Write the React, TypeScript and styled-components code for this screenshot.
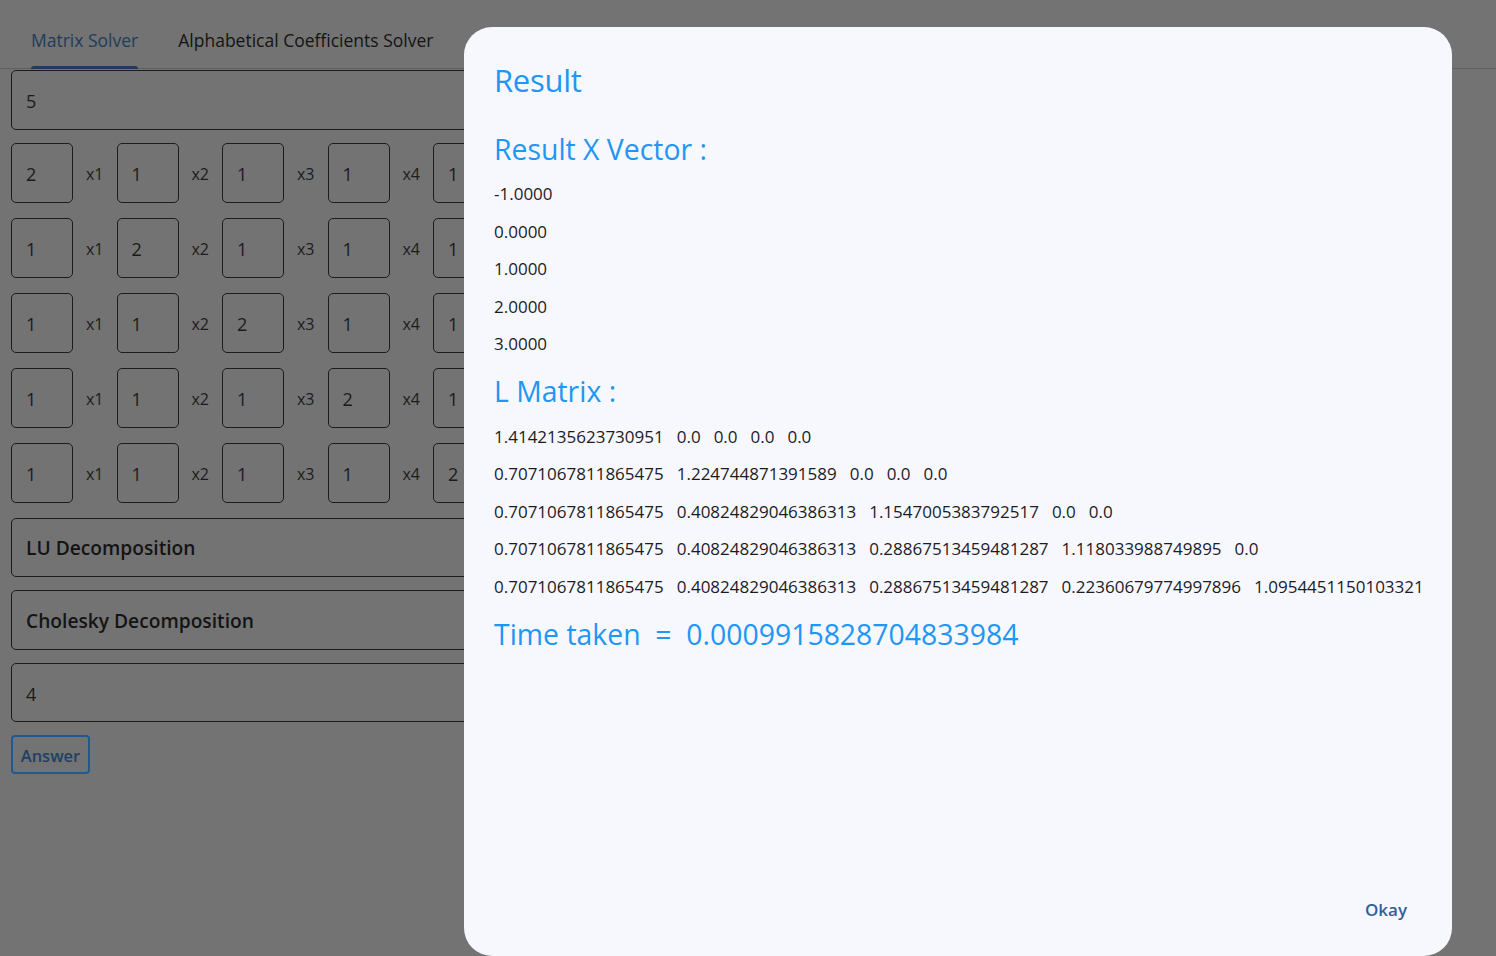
import React from "react";
import styled, { createGlobalStyle } from "styled-components";

const GlobalStyle = createGlobalStyle`
  html, body {
    margin: 0;
    padding: 0;
    background: #737373;
    font-family: "Open Sans", "Noto Sans", sans-serif;
  }
  * { box-sizing: border-box; }
`;

const Backdrop = styled.div`
  position: relative;
  width: 1496px;
  height: 956px;
  overflow: hidden;
  background: #737373;
`;

const TabBar = styled.div`
  display: flex;
  height: 69px;
  padding-left: 11px;
  border-bottom: 1px solid #5f5f5f;
`;

const Tab = styled.div<{ $active?: boolean }>`
  position: relative;
  padding: 26px 20px 0;
  font-size: 17.5px;
  font-weight: 500;
  line-height: 28px;
  color: ${(p) => (p.$active ? "#203c5b" : "#141414")};
`;

const Indicator = styled.span`
  position: absolute;
  left: 20px;
  right: 20px;
  bottom: -1px;
  height: 3px;
  border-radius: 3px 3px 0 0;
  background: #203c5b;
`;

const Form = styled.div`
  display: flex;
  flex-direction: column;
  padding: 1px 11px 0;
  width: 1100px;
`;

const Field = styled.div<{ $mt?: number; $bold?: boolean }>`
  height: 59.5px;
  margin-top: ${(p) => p.$mt ?? 0}px;
  border: 1.5px solid #1c1c1c;
  border-radius: 5px;
  display: flex;
  align-items: center;
  padding: ${(p) => (p.$bold ? "1px 0 0 14px" : "3px 0 0 14px")};
  font-size: ${(p) => (p.$bold ? "19.2px" : "18px")};
  font-weight: ${(p) => (p.$bold ? 600 : 400)};
  color: ${(p) => (p.$bold ? "#141414" : "#1a1a1a")};
`;

const Grid = styled.div`
  display: flex;
  flex-direction: column;
  gap: 15px;
  margin-top: 13px;
`;

const Row = styled.div`
  display: flex;
  align-items: center;
`;

const Cell = styled.div`
  width: 62px;
  height: 60px;
  flex: none;
  border: 1.5px solid #1c1c1c;
  border-radius: 5px;
  display: flex;
  align-items: center;
  padding: 2px 0 0 14px;
  font-size: 18px;
  color: #1a1a1a;
`;

const VarLabel = styled.div`
  width: 43.5px;
  flex: none;
  padding-top: 2px;
  text-align: center;
  font-size: 16px;
  color: #1c1c1c;
`;

const AnswerButton = styled.button`
  align-self: flex-start;
  margin-top: 13px;
  height: 39px;
  width: 79px;
  padding: 1px 0 0;
  border: 2px solid #1d5a94;
  border-radius: 4px;
  background: transparent;
  font-family: inherit;
  font-size: 16.5px;
  font-weight: 600;
  color: #1f4066;
`;

const Dialog = styled.div`
  position: absolute;
  left: 464px;
  top: 27px;
  width: 988px;
  height: 929px;
  background: #f7f8fe;
  border-radius: 28px;
  padding: 32px 33px 27px 30px;
  display: flex;
  flex-direction: column;
`;

const Title = styled.h1`
  margin: 0;
  font-size: 31px;
  line-height: 42px;
  font-weight: 400;
  color: #2196f3;
  letter-spacing: -0.3px;
`;

const Heading = styled.h2<{ $mt: number }>`
  margin: ${(p) => p.$mt}px 0 0;
  font-size: 28.4px;
  line-height: 40px;
  font-weight: 400;
  color: #2196f3;
`;

const List = styled.div<{ $mt: number }>`
  margin-top: ${(p) => p.$mt}px;
  display: flex;
  flex-direction: column;
`;

const Line = styled.div`
  height: 37.5px;
  display: flex;
  align-items: center;
  gap: 13px;
  font-size: 17px;
  color: #1c1b1f;
`;

const Actions = styled.div`
  margin-top: auto;
  display: flex;
  justify-content: flex-end;
`;

const TextButton = styled.button`
  height: 40px;
  padding: 0 12px;
  border: none;
  background: transparent;
  font-family: inherit;
  font-size: 17px;
  font-weight: 600;
  color: #30609a;
`;

const matrix = [
  [2, 1, 1, 1, 1],
  [1, 2, 1, 1, 1],
  [1, 1, 2, 1, 1],
  [1, 1, 1, 2, 1],
  [1, 1, 1, 1, 2],
];

const xVector = ["-1.0000", "0.0000", "1.0000", "2.0000", "3.0000"];

const lMatrix = [
  ["1.4142135623730951", "0.0", "0.0", "0.0", "0.0"],
  ["0.7071067811865475", "1.224744871391589", "0.0", "0.0", "0.0"],
  ["0.7071067811865475", "0.40824829046386313", "1.1547005383792517", "0.0", "0.0"],
  ["0.7071067811865475", "0.40824829046386313", "0.28867513459481287", "1.118033988749895", "0.0"],
  ["0.7071067811865475", "0.40824829046386313", "0.28867513459481287", "0.22360679774997896", "1.0954451150103321"],
];

export default function App() {
  return (
    <>
      <GlobalStyle />
      <Backdrop>
        <TabBar>
          <Tab $active>
            Matrix Solver
            <Indicator />
          </Tab>
          <Tab>Alphabetical Coefficients Solver</Tab>
        </TabBar>
        <Form>
          <Field>5</Field>
          <Grid>
            {matrix.map((row, r) => (
              <Row key={r}>
                {row.map((v, c) => (
                  <React.Fragment key={c}>
                    <Cell>{v}</Cell>
                    {c < row.length - 1 && <VarLabel>x{c + 1}</VarLabel>}
                  </React.Fragment>
                ))}
              </Row>
            ))}
          </Grid>
          <Field $mt={15} $bold>LU Decomposition</Field>
          <Field $mt={13} $bold>Cholesky Decomposition</Field>
          <Field $mt={13}>4</Field>
          <AnswerButton>Answer</AnswerButton>
        </Form>

        <Dialog>
          <Title>Result</Title>
          <Heading $mt={28}>Result X Vector :</Heading>
          <List $mt={6}>
            {xVector.map((v) => (
              <Line key={v}>{v}</Line>
            ))}
          </List>
          <Heading $mt={8}>L Matrix :</Heading>
          <List $mt={7}>
            {lMatrix.map((row, i) => (
              <Line key={i}>
                {row.map((v, j) => (
                  <span key={j}>{v}</span>
                ))}
              </Line>
            ))}
          </List>
          <Heading $mt={9}>Time taken&nbsp; = &nbsp;0.0009915828704833984</Heading>
          <Actions>
            <TextButton>Okay</TextButton>
          </Actions>
        </Dialog>
      </Backdrop>
    </>
  );
}
